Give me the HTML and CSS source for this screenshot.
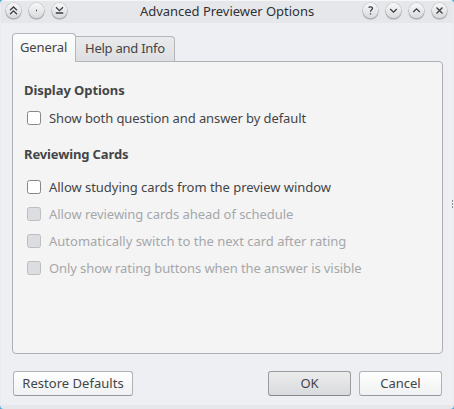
FILE: index.html
```
<!DOCTYPE html>
<html lang="en">
<head>
<meta charset="utf-8">
<title>Advanced Previewer Options</title>
<link rel="stylesheet" href="styles.css">
</head>
<body>
<div class="window">
  <header class="titlebar">
    <div class="controls">
      <span class="control"><svg viewBox="0 0 15 15"><path d="M4 7.3 7.5 4 11 7.3M4 11.2l3.5-3.3 3.5 3.3"/></svg></span>
      <span class="control"><svg viewBox="0 0 15 15"><path d="M7 7.5h1"/></svg></span>
      <span class="control"><svg viewBox="0 0 15 15"><path d="M4 4.3l3.5 3.3L11 4.3M3.8 10h7.4"/></svg></span>
    </div>
    <h1 class="title"><span class="t-title">Advanced Previewer Options</span></h1>
    <div class="controls">
      <span class="control"><svg viewBox="0 0 15 15"><path d="M5.5 4.4c1.5-1 4-.8 4 .9 0 1.6-2 1.4-2 3.4M7.5 10.3v1.2"/></svg></span>
      <span class="control"><svg viewBox="0 0 15 15"><path d="M4.2 6l3.3 3.1L10.8 6"/></svg></span>
      <span class="control"><svg viewBox="0 0 15 15"><path d="M4.2 9l3.3-3.1L10.8 9"/></svg></span>
      <span class="control"><svg viewBox="0 0 15 15"><path d="M4.5 4.500l6 6M10.5 4.500l-6 6"/></svg></span>
    </div>
  </header>
  <main class="content">
    <nav class="tabs">
      <div class="tab active"><span class="t-general">General</span></div>
      <div class="tab"><span class="t-help">Help and Info</span></div>
    </nav>
    <section class="panel">
      <h2><span class="t-display">Display Options</span></h2>
      <div class="option"><i class="box"></i><span class="t-show">Show both question and answer by default</span></div>
      <h2 class="second"><span class="t-review">Reviewing Cards</span></h2>
      <div class="option"><i class="box"></i><span class="t-study">Allow studying cards from the preview window</span></div>
      <div class="option disabled"><i class="box"></i><span class="t-ahead">Allow reviewing cards ahead of schedule</span></div>
      <div class="option disabled"><i class="box"></i><span class="t-auto">Automatically switch to the next card after rating</span></div>
      <div class="option disabled"><i class="box"></i><span class="t-only">Only show rating buttons when the answer is visible</span></div>
    </section>
    <footer class="buttons">
      <button class="restore"><span class="t-restore">Restore Defaults</span></button>
      <button class="default"><span class="t-ok">OK</span></button>
      <button><span class="t-cancel">Cancel</span></button>
    </footer>
  </main>
  <div class="grip"><i></i><i></i><i></i></div>
</div>
</body>
</html>
```
FILE: styles.css
```
* { box-sizing: border-box; }
body {
  margin: 0;
  background: #4ba9d3;
  font: 13px/18px "Noto Sans", sans-serif;
  color: #434547;
}
.window {
  position: relative;
  width: 454px;
  height: 409px;
  overflow: hidden;
  border-radius: 4px;
  border: 1px solid #e9ebee;
  border-top-color: #f5f6f7;
  border-bottom: 4px solid #e5e7ea;
  background: #eeeff2;
}
.titlebar {
  display: flex;
  align-items: center;
  justify-content: space-between;
  height: 22px;
  padding: 0 6px 3px 5px;
  background: #e5e7ea;
  color: #303234;
}
.controls { display: flex; gap: 8px; }
.control {
  width: 15px;
  height: 15px;
  border-radius: 50%;
  background: linear-gradient(#f8f8f9, #d8dadd);
  box-shadow: 0 0 0 .6px #babcc0, 0 1px 1px .5px #a2a4a8;
}
.control svg {
  display: block;
  width: 15px;
  height: 15px;
  fill: none;
  stroke: #3b3d40;
  stroke-width: 1.3;
}
.title { margin: 0; flex: 1; padding: 1px 0 0 73px; font-size: 13px; font-weight: 400; line-height: 18px; }
.content { padding: 10px 10px 0 11px; }
.tabs { position: relative; display: flex; align-items: flex-end; height: 29px; margin-bottom: -1px; }
.tab {
  height: 26px;
  width: 99px;
  padding: 2px 0 0 9px;
  border: 1px solid #b4b6ba;
  border-left: 0;
  border-radius: 0 4px 0 0;
  background: linear-gradient(#e9eaec, #dddee1);
}
.tab.active {
  height: 29px;
  width: 64px;
  padding: 4px 0 0 7px;
  border-left: 1px solid #afb1b5;
  border-bottom: 0;
  border-radius: 4px 4px 0 0;
  background: linear-gradient(#fbfcfc, #f4f4f4);
}
.panel {
  height: 293px;
  padding: 19px 11px 0;
  border: 1px solid #aeb0b4;
  border-radius: 0 4px 4px 4px;
  background: #f4f4f4;
}
h2 { margin: 0; font-size: 13px; line-height: 18px; font-weight: 700; }
.second { margin: 13px 0 15px; }
.option { display: flex; align-items: center; gap: 8px; height: 18px; margin-top: 9px; padding-left: 3px; }
h2:first-child + .option { margin-top: 10px; margin-bottom: 18px; }
.box {
  width: 14px;
  height: 14px;
  border: 1px solid #85878c;
  border-radius: 2.5px;
  background: #fff;
}
.disabled { color: #a5a7aa; }
.disabled .box { border-color: #bcbec1; background: #dcdde0; }
.buttons { display: flex; gap: 8px; margin: 17px 1px 0; }
button {
  width: 83px;
  height: 25px;
  padding: 0 0 1px;
  font: inherit;
  color: inherit;
  border: 1px solid #b0b2b5;
  border-bottom-color: #96989c;
  border-radius: 3px;
  background: linear-gradient(#fff, #f0f1f2);
}
.restore { width: 120px; margin-right: auto; }
.default { background: linear-gradient(#ececed, #d9dadd); border-color: #999b9f; border-bottom-color: #85878b; }
.grip { position: absolute; right: -1px; top: 199px; display: grid; gap: 1px; }
.grip i { width: 2px; height: 2px; background: #8d8f93; }
button span, h1 span, h2 span, .tab span, .option span { white-space: nowrap; }

.t-title { letter-spacing: -.03px; }
.t-general { letter-spacing: -.1px; }
.t-help { letter-spacing: -.25px; }
.t-display { letter-spacing: -.07px; }
.t-review { letter-spacing: -.13px; }
.t-show { letter-spacing: -.09px; }
.t-study { letter-spacing: -.035px; }
.t-ahead { letter-spacing: -.05px; }
.t-only { letter-spacing: -.095px; }
.t-restore { letter-spacing: .03px; }
```
